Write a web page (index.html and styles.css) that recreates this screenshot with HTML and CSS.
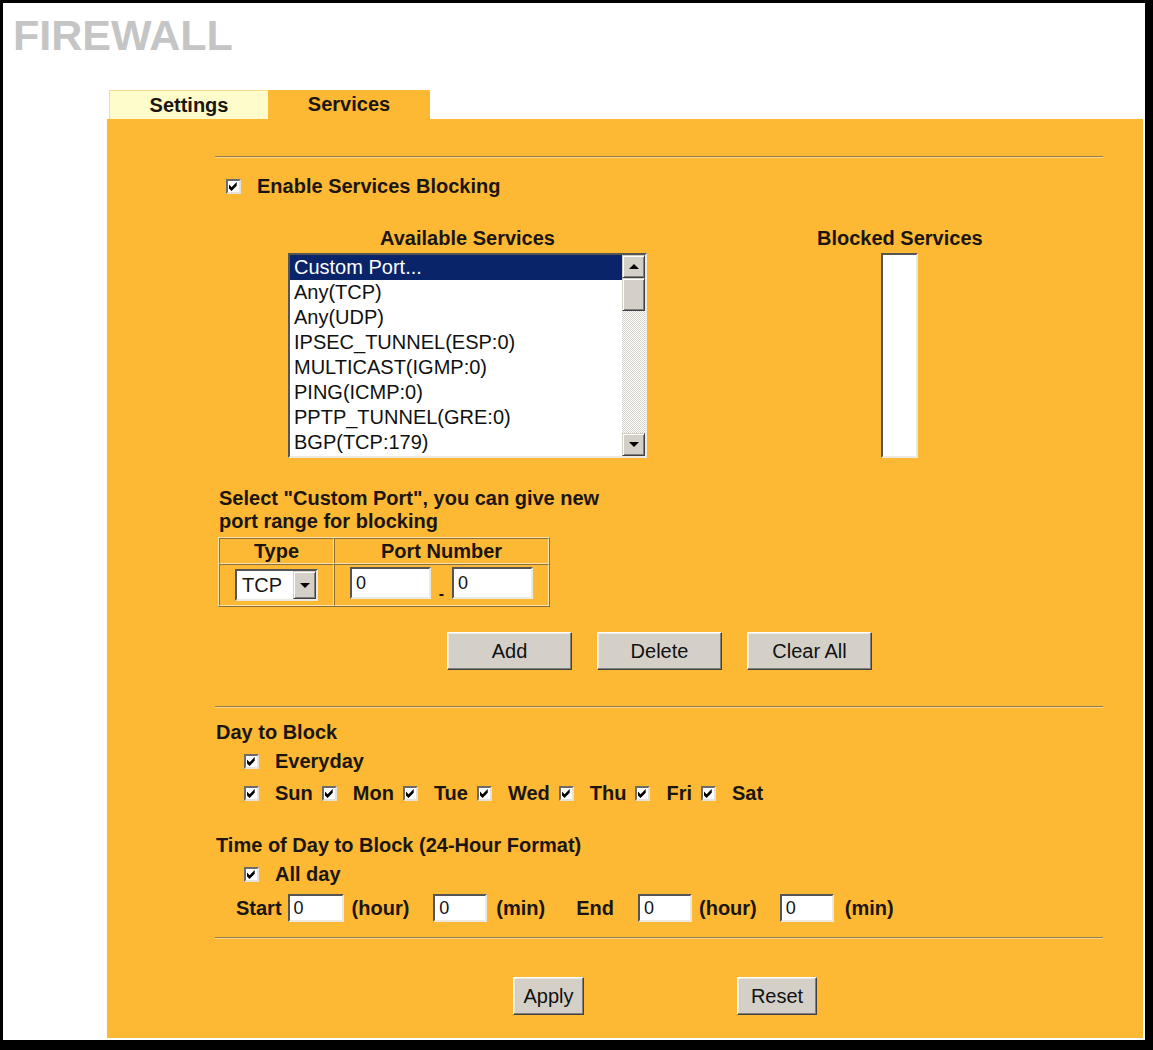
FILE: index.html
```html
<!DOCTYPE html>
<html lang="en">
<head>
  <meta charset="UTF-8" />
  <title>Firewall - Services</title>
  <link rel="stylesheet" href="styles.css">
</head>
<body>
  <div class="frame">
    <h1 class="title">FIREWALL</h1>

    <!-- tab bar -->
    <div class="tabs">
      <div class="tab tab-off">Settings</div>
      <div class="tab tab-on">Services</div>
    </div>

    <div class="panel">
      <hr class="rule">

      <div class="check enable">
        <span class="cb"><svg viewBox="0 0 7 7"><path d="M0 2 L2 4 L6 0 L6 3 L2 7 L0 5 Z"/></svg></span>
        <span>Enable Services Blocking</span>
      </div>

      <!-- service lists -->
      <div class="lists">
        <div class="list-col">
          <div class="list-head">Available Services</div>
          <div class="listbox avail">
            <ul class="options">
              <li class="sel">Custom Port...</li>
              <li>Any(TCP)</li>
              <li>Any(UDP)</li>
              <li>IPSEC_TUNNEL(ESP:0)</li>
              <li>MULTICAST(IGMP:0)</li>
              <li>PING(ICMP:0)</li>
              <li>PPTP_TUNNEL(GRE:0)</li>
              <li>BGP(TCP:179)</li>
            </ul>
            <div class="vscroll">
              <div class="sb-btn"><span class="arrow-up"></span></div>
              <div class="sb-btn sb-thumb"></div>
              <div class="sb-space"></div>
              <div class="sb-btn"><span class="arrow-down"></span></div>
            </div>
          </div>
        </div>
        <div class="list-col">
          <div class="list-head">Blocked Services</div>
          <div class="listbox blocked"></div>
        </div>
      </div>

      <p class="note">Select "Custom Port", you can give new<br>port range for blocking</p>

      <table class="port-table">
        <tr>
          <th class="col-type">Type</th>
          <th class="col-port">Port Number</th>
        </tr>
        <tr>
          <td>
            <div class="dropdown">
              <span class="dropdown-value">TCP</span>
              <span class="dropdown-btn"><span class="arrow-down"></span></span>
            </div>
          </td>
          <td>
            <input class="field port" type="text" value="0"><span class="dash">-</span><input class="field port" type="text" value="0">
          </td>
        </tr>
      </table>

      <div class="btn-row">
        <button class="btn">Add</button>
        <button class="btn">Delete</button>
        <button class="btn">Clear All</button>
      </div>

      <hr class="rule rule-mid">

      <!-- schedule -->
      <div class="section-title day-title">Day to Block</div>
      <div class="check indent everyday">
        <span class="cb"><svg viewBox="0 0 7 7"><path d="M0 2 L2 4 L6 0 L6 3 L2 7 L0 5 Z"/></svg></span>
        <span>Everyday</span>
      </div>
      <div class="days indent">
        <span class="check"><span class="cb"><svg viewBox="0 0 7 7"><path d="M0 2 L2 4 L6 0 L6 3 L2 7 L0 5 Z"/></svg></span>Sun</span>
        <span class="check"><span class="cb"><svg viewBox="0 0 7 7"><path d="M0 2 L2 4 L6 0 L6 3 L2 7 L0 5 Z"/></svg></span>Mon</span>
        <span class="check"><span class="cb"><svg viewBox="0 0 7 7"><path d="M0 2 L2 4 L6 0 L6 3 L2 7 L0 5 Z"/></svg></span>Tue</span>
        <span class="check"><span class="cb"><svg viewBox="0 0 7 7"><path d="M0 2 L2 4 L6 0 L6 3 L2 7 L0 5 Z"/></svg></span>Wed</span>
        <span class="check"><span class="cb"><svg viewBox="0 0 7 7"><path d="M0 2 L2 4 L6 0 L6 3 L2 7 L0 5 Z"/></svg></span>Thu</span>
        <span class="check"><span class="cb"><svg viewBox="0 0 7 7"><path d="M0 2 L2 4 L6 0 L6 3 L2 7 L0 5 Z"/></svg></span>Fri</span>
        <span class="check"><span class="cb"><svg viewBox="0 0 7 7"><path d="M0 2 L2 4 L6 0 L6 3 L2 7 L0 5 Z"/></svg></span>Sat</span>
      </div>

      <div class="section-title time-title">Time of Day to Block (24-Hour Format)</div>
      <div class="check indent allday">
        <span class="cb"><svg viewBox="0 0 7 7"><path d="M0 2 L2 4 L6 0 L6 3 L2 7 L0 5 Z"/></svg></span>
        <span>All day</span>
      </div>
      <div class="time-row">
        <span>Start</span>
        <input class="field t1" type="text" value="0">
        <span class="u-hour1">(hour)</span>
        <input class="field t2" type="text" value="0">
        <span class="u-min1">(min)</span>
        <span class="end-label">End</span>
        <input class="field t3" type="text" value="0">
        <span class="u-hour2">(hour)</span>
        <input class="field t4" type="text" value="0">
        <span class="u-min2">(min)</span>
      </div>

      <hr class="rule rule-bottom">

      <div class="actions">
        <button class="btn btn-apply">Apply</button>
        <button class="btn btn-reset">Reset</button>
      </div>
    </div>
  </div>
</body>
</html>
```

FILE: styles.css
```css
* {
  box-sizing: border-box;
}

body {
  margin: 0;
  font-family: "Liberation Sans", Arial, sans-serif;
  color: #1b1510;
  background: #fff;
}

.frame {
  width: 1153px;
  height: 1050px;
  border-style: solid;
  border-color: #000;
  border-width: 3px 8px 10px 3px;
  background: #fff;
  overflow: hidden;
}

.title {
  margin: 11px 0 0 10px;
  font-size: 43px;
  line-height: 43px;
  font-weight: bold;
  color: #c5c5c5;
}

/* tabs */
.tabs {
  display: flex;
  margin: 33px 0 0 106px;
  height: 29px;
}

.tab {
  height: 29px;
  line-height: 29px;
  font-size: 20px;
  font-weight: bold;
  text-align: center;
}

.tab-off {
  width: 159px;
  background: #fffccc;
  border-top: 1px solid #f7dc8c;
  border-left: 1px solid #f7dc8c;
}

.tab-on {
  width: 162px;
  background: #fdb933;
}

.panel {
  margin-left: 104px;
  width: 1036px;
  height: 919px;
  background: #fdb933;
  padding: 37px 40px 0 108px;
  font-size: 20px;
  font-weight: bold;
}

.rule {
  margin: 0;
  height: 0;
  border: 0;
  border-top: 1px solid #8f7a52;
  border-bottom: 1px solid #ffd78a;
}

.rule-mid {
  margin-top: 36px;
}

.rule-bottom {
  margin-top: 15px;
}

/* checkboxes */
.check {
  display: flex;
  align-items: center;
  height: 23px;
  line-height: 23px;
  white-space: nowrap;
}

.cb {
  display: inline-flex;
  align-items: center;
  justify-content: center;
  width: 15px;
  height: 15px;
  margin-right: 16px;
  background: #fff;
  border: 2px solid;
  border-color: #6b6b6b #e6e2da #e6e2da #6b6b6b;
  flex: none;
}

.cb svg {
  width: 9px;
  height: 9px;
  fill: #000;
}

.enable {
  margin-top: 17px;
  padding-left: 11px;
}

/* lists */
.lists {
  display: flex;
  gap: 170px;
  margin: 29px 0 0 73px;
}

.list-col {
  display: flex;
  flex-direction: column;
  align-items: center;
}

.list-head {
  line-height: 23px;
  margin-bottom: 3px;
  white-space: nowrap;
}

.listbox {
  display: flex;
  height: 205px;
  background: #fff;
  border: 2px solid;
  border-color: #555 #ece9e2 #ece9e2 #555;
}

.listbox.avail {
  width: 359px;
}

.listbox.blocked {
  width: 37px;
}

.options {
  flex: 1;
  list-style: none;
  margin: 0;
  padding: 0;
  font-weight: normal;
  font-size: 20px;
  line-height: 25px;
  color: #111;
}

.options li {
  padding-left: 4px;
  white-space: nowrap;
}

.options li.sel {
  background: #0a246a;
  color: #fff;
}

.vscroll {
  width: 23px;
  display: flex;
  flex-direction: column;
  background: repeating-conic-gradient(#d4d0c8 0 25%, #fff 0 50%) 0 0 / 2px 2px;
}

.sb-btn {
  height: 23px;
  display: flex;
  align-items: center;
  justify-content: center;
  background: #d4d0c8;
  border: 1px solid;
  border-color: #d4d0c8 #404040 #404040 #d4d0c8;
  box-shadow: inset 1px 1px #fff, inset -1px -1px #808080;
}

.sb-thumb {
  height: 33px;
}

.sb-space {
  flex: 1;
}

.arrow-up,
.arrow-down {
  width: 0;
  height: 0;
  border-left: 5px solid transparent;
  border-right: 5px solid transparent;
}

.arrow-up {
  border-bottom: 5px solid #000;
}

.arrow-down {
  border-top: 5px solid #000;
}

/* custom port */
.note {
  margin: 29px 0 0 4px;
  line-height: 23px;
}

.port-table {
  margin: 4px 0 0 3px;
  border-collapse: separate;
  border-spacing: 0;
  border: 1px solid;
  border-color: #f6e2ae #8d6f3a #8d6f3a #f6e2ae;
}

.port-table th,
.port-table td {
  padding: 0;
  border: 1px solid;
  border-color: #8d6f3a #f6e2ae #f6e2ae #8d6f3a;
  text-align: center;
}

.port-table th {
  height: 26px;
  line-height: 22px;
}

.port-table td {
  height: 42px;
}

.col-type {
  width: 115px;
}

.col-port {
  width: 215px;
}

.dropdown {
  display: inline-flex;
  vertical-align: middle;
  width: 83px;
  height: 32px;
  background: #fff;
  border: 2px solid;
  border-color: #555 #ece9e2 #ece9e2 #555;
}

.dropdown-value {
  flex: 1;
  padding-left: 5px;
  text-align: left;
  font-weight: normal;
  line-height: 28px;
}

.dropdown-btn {
  width: 23px;
  display: flex;
  align-items: center;
  justify-content: center;
  background: #d4d0c8;
  border: 1px solid;
  border-color: #d4d0c8 #404040 #404040 #d4d0c8;
  box-shadow: inset 1px 1px #fff, inset -1px -1px #808080;
}

.field {
  height: 32px;
  margin: 0;
  padding: 0 0 0 4px;
  background: #fff;
  border: 2px solid;
  border-color: #555 #ece9e2 #ece9e2 #555;
  font-family: inherit;
  font-size: 18px;
  color: #111;
  outline: none;
  vertical-align: middle;
}

.field.port {
  width: 81px;
}

.dash {
  display: inline-block;
  width: 21px;
  font-size: 16px;
  vertical-align: -10px;
}

/* buttons */
.btn-row {
  display: flex;
  gap: 25px;
  margin: 25px 0 0 232px;
}

.btn {
  width: 125px;
  height: 38px;
  padding: 0;
  font-family: inherit;
  font-size: 20px;
  color: #111;
  background: #d4d0c8;
  border: 1px solid;
  border-color: #fff #404040 #404040 #fff;
  box-shadow: inset -1px -1px #808080, inset 1px 1px #ebe9e4;
}

/* schedule */
.section-title {
  line-height: 23px;
  padding-left: 1px;
}

.day-title {
  margin-top: 13px;
}

.indent {
  padding-left: 29px;
}

.everyday {
  margin-top: 6px;
}

.days {
  display: flex;
  margin-top: 9px;
}

.days .check {
  margin-right: 9px;
}

.time-title {
  margin-top: 29px;
}

.allday {
  margin-top: 6px;
}

.time-row {
  display: flex;
  align-items: center;
  height: 28px;
  margin-top: 8px;
  padding-left: 21px;
  white-space: nowrap;
}

.time-row .field {
  height: 28px;
  width: 54px;
  margin-left: 24px;
}

.time-row .t1 {
  width: 56px;
  margin-left: 6px;
}

.u-hour1 {
  margin-left: 8px;
}

.u-min1 {
  margin-left: 9px;
}

.end-label {
  margin-left: 31px;
}

.u-hour2 {
  margin-left: 7px;
}

.time-row .t4 {
  margin-left: 23px;
}

.u-min2 {
  margin-left: 11px;
}

.actions {
  display: flex;
  margin: 38px 0 0 298px;
}

.btn-apply {
  width: 71px;
}

.btn-reset {
  width: 80px;
  margin-left: 153px;
}
```
